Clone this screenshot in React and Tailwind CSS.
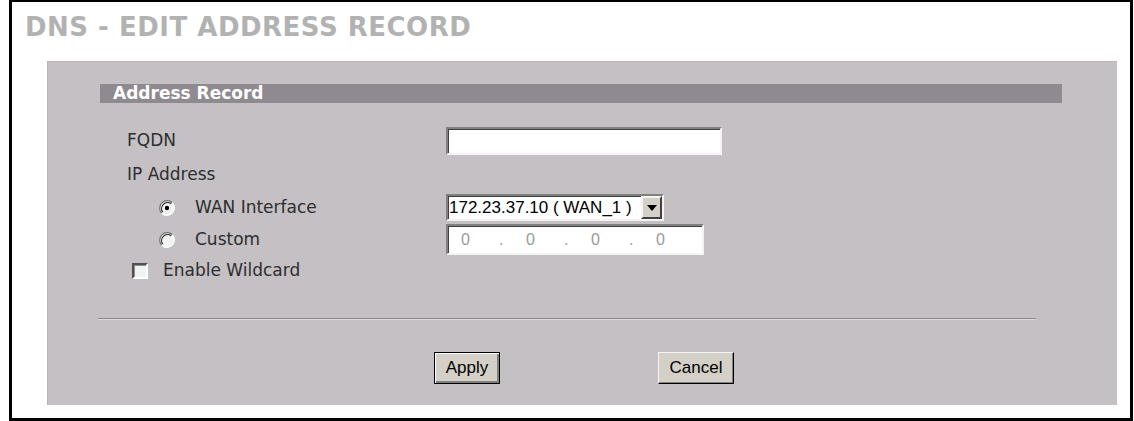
function Radio({ checked }) {
  return (
    <svg width="16" height="16" viewBox="0 0 16 16" className="shrink-0">
      <circle cx="8" cy="8" r="7.5" fill="#f2f2f2" />
      <path d="M13.3 2.7 A7.5 7.5 0 0 0 2.7 13.3" fill="none" stroke="#707070" strokeWidth="1.2" />
      <path d="M12.2 3.8 A6 6 0 0 0 3.8 12.2" fill="none" stroke="#303030" strokeWidth="1.2" />
      <path d="M2.7 13.3 A7.5 7.5 0 0 0 13.3 2.7" fill="none" stroke="#ffffff" strokeWidth="1.2" />
      {checked && <circle cx="8" cy="8" r="2.2" fill="#000" />}
    </svg>
  );
}

export default function App() {
  const label = "text-[17px] text-[#2e2e2e]";
  const sunken =
    "border-2 border-t-[#808080] border-l-[#808080] border-b-[#f4f4f4] border-r-[#f4f4f4] shadow-[inset_1px_1px_0_#404040]";

  return (
    <div className="w-[1134px] h-[421px] bg-white font-['DejaVu_Sans',sans-serif]">
      <div className="ml-[9px] w-[1124px] h-[421px] border-[3px] border-t-2 border-black">
        {/* Title */}
        <div className="pl-[13px] pt-[10px] h-[59px] text-[26px] font-bold leading-[30px] tracking-[0.5px] text-[#b2b2b2]">
          DNS - EDIT ADDRESS RECORD
        </div>

        {/* Panel */}
        <div className="ml-[35px] w-[1070px] h-[344px] bg-[#c4c0c4] border-t border-l border-[#b8b4b8] pt-[22px] pl-[52px]">
          <div className="w-[962px] h-[19px] bg-[#8e8a8f] pl-[13px] text-[17px] font-bold leading-[19px] text-white">
            Address Record
          </div>

          {/* FQDN */}
          <div className="mt-[24px] h-[28px] flex items-center">
            <div className={`${label} w-[346px] pl-[27px]`}>FQDN</div>
            <div className={`${sunken} w-[276px] h-[28px] bg-white`} />
          </div>

          {/* IP Address */}
          <div className="mt-[10px] h-[20px] flex items-center">
            <div className={`${label} pl-[27px]`}>IP Address</div>
          </div>

          {/* WAN Interface */}
          <div className="mt-[9px] h-[27px] flex items-center">
            <div className="w-[346px] flex items-center pl-[59px]">
              <Radio checked />
              <div className={`${label} ml-[20px]`}>WAN Interface</div>
            </div>
            <div className={`${sunken} w-[218px] h-[27px] bg-white flex items-center justify-between`}>
              <span className="pl-[1px] font-['Liberation_Sans',sans-serif] text-[17px] text-black leading-none">
                172.23.37.10 ( WAN_1 )
              </span>
              <div className="w-[21px] h-[23px] bg-[#d4d0c8] border-2 border-t-[#f4f4f4] border-l-[#f4f4f4] border-b-[#404040] border-r-[#404040] flex items-center justify-center">
                <div className="w-0 h-0 border-l-[5px] border-r-[5px] border-t-[6px] border-l-transparent border-r-transparent border-t-black" />
              </div>
            </div>
          </div>

          {/* Custom */}
          <div className="mt-[3px] h-[31px] flex items-center">
            <div className="w-[346px] flex items-center pl-[59px]">
              <Radio />
              <div className={`${label} ml-[20px]`}>Custom</div>
            </div>
            <div className={`${sunken} w-[258px] h-[31px] bg-white flex items-center pl-[13px] font-['Liberation_Sans',sans-serif] text-[16px] text-[#9a9a9a]`}>
              <span className="w-[38px]">0</span>
              <span className="w-[27px]">.</span>
              <span className="w-[38px]">0</span>
              <span className="w-[27px]">.</span>
              <span className="w-[38px]">0</span>
              <span className="w-[27px]">.</span>
              <span>0</span>
            </div>
          </div>

          {/* Enable Wildcard */}
          <div className="mt-[6px] h-[20px] flex items-center pl-[32px]">
            <div className="shrink-0 w-[16px] h-[16px] bg-[#f2f2f2] border-2 border-t-[#505050] border-l-[#505050] border-b-[#ffffff] border-r-[#ffffff] shadow-[inset_1px_1px_0_#909090]" />
            <div className={`${label} ml-[15px]`}>Enable Wildcard</div>
          </div>

          {/* Separator */}
          <div className="mt-[37px] -ml-[2px] w-[938px] h-[2px] border-t border-[#8a868a] border-b border-b-[#dedade]" />

          {/* Buttons */}
          <div className="mt-[32px] flex items-center font-['Liberation_Sans',sans-serif] text-[17px] text-black">
            <button className="ml-[334px] w-[66px] h-[32px] bg-[#d4d0c8] border border-black shadow-[inset_1px_1px_0_#ffffff,inset_-2px_-2px_0_#808080]">
              Apply
            </button>
            <button className="ml-[158px] w-[76px] h-[32px] bg-[#d4d0c8] border border-t-[#f4f4f4] border-l-[#f4f4f4] border-b-black border-r-black shadow-[inset_-1px_-1px_0_#808080]">
              Cancel
            </button>
          </div>
        </div>
      </div>
    </div>
  );
}
